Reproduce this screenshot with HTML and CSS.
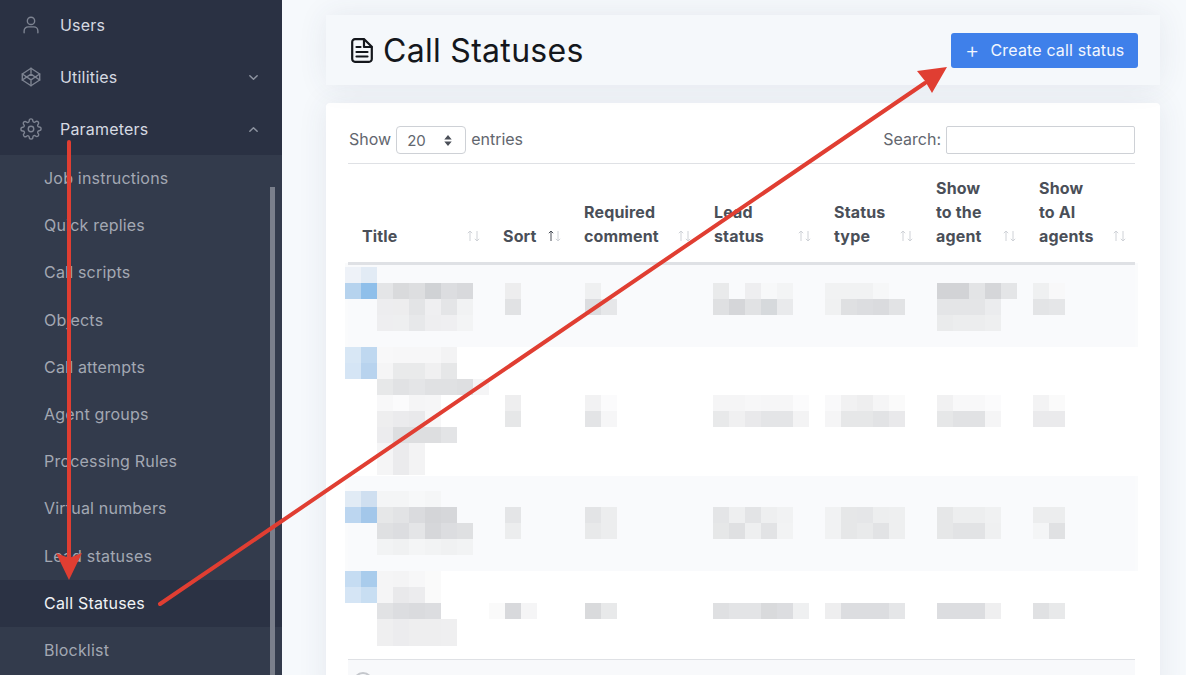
FILE: index.html
```html
<!DOCTYPE html>
<html lang="en">
<head>
<meta charset="utf-8">
<title>Call Statuses</title>
<link rel="stylesheet" href="styles.css">
</head>
<body>
<div class="app">
  <aside class="sidebar">
    <ul class="menu">
      <li class="menu-item">
        <svg class="menu-icon" viewBox="0 0 24 24"><circle cx="12" cy="7.5" r="4"/><path d="M4.5 20.5v-2a4.5 4.5 0 0 1 4.5-4.5h6a4.5 4.5 0 0 1 4.5 4.5v2"/></svg>
        <span class="menu-label">Users</span>
      </li>
      <li class="menu-item">
        <svg class="menu-icon" viewBox="0 0 24 24"><path d="M12 2.5l9.5 6.2v6.6L12 21.5l-9.5-6.2V8.7z"/><path d="M12 2.5v5.2M12 16.3v5.2M2.5 8.7L12 15.2l9.5-6.5M2.5 15.3L12 8.8l9.5 6.5"/></svg>
        <span class="menu-label">Utilities</span>
        <svg class="chevron" viewBox="0 0 12 12"><path d="M2 4l4 4 4-4"/></svg>
      </li>
      <li class="menu-item">
        <svg class="menu-icon" viewBox="0 0 24 24"><circle cx="12" cy="12" r="3"/><path d="M19.4 15a1.65 1.65 0 0 0 .33 1.82l.06.06a2 2 0 1 1-2.83 2.83l-.06-.06a1.65 1.65 0 0 0-2.82 1.17V21a2 2 0 1 1-4 0v-.09a1.65 1.65 0 0 0-2.82-1.12l-.06.06a2 2 0 1 1-2.83-2.83l.06-.06a1.65 1.65 0 0 0-1.17-2.82H3a2 2 0 1 1 0-4h.09a1.65 1.65 0 0 0 1.12-2.82l-.06-.06a2 2 0 1 1 2.83-2.83l.06.06a1.65 1.65 0 0 0 1.82.33H9a1.65 1.65 0 0 0 1-1.51V3a2 2 0 1 1 4 0v.09a1.65 1.65 0 0 0 2.82 1.12l.06-.06a2 2 0 1 1 2.83 2.83l-.06.06a1.65 1.65 0 0 0 1.12 2.82H21a2 2 0 1 1 0 4h-.09a1.65 1.65 0 0 0-1.51 1z"/></svg>
        <span class="menu-label">Parameters</span>
        <svg class="chevron" viewBox="0 0 12 12"><path d="M2 8l4-4 4 4"/></svg>
      </li>
    </ul>
    <div class="submenu-wrap">
      <ul class="submenu">
        <li class="sub-item">Job instructions</li>
        <li class="sub-item">Quick replies</li>
        <li class="sub-item">Call scripts</li>
        <li class="sub-item">Objects</li>
        <li class="sub-item">Call attempts</li>
        <li class="sub-item">Agent groups</li>
        <li class="sub-item">Processing Rules</li>
        <li class="sub-item">Virtual numbers</li>
        <li class="sub-item">Lead statuses</li>
        <li class="sub-item active">Call Statuses</li>
        <li class="sub-item">Blocklist</li>
      </ul>
      <div class="scrollbar"></div>
    </div>
  </aside>

  <main class="content">
    <header class="page-head">
      <h1 class="page-title">
        <svg class="title-icon" viewBox="0 0 22 25"><path d="M4 1.2h9.2l7.6 7.6V21a2.8 2.8 0 0 1-2.8 2.8H4A2.8 2.8 0 0 1 1.2 21V4A2.8 2.8 0 0 1 4 1.2z"/><path d="M13 1.5v7.5h7.5M5.5 9h4M5.5 14h11M5.5 18.5h11"/></svg>
        Call Statuses
      </h1>
      <button class="create-btn"><span class="plus">+</span>Create call status</button>
    </header>

    <section class="card">
      <div class="controls">
        <label class="length">Show
          <span class="select">20
            <svg class="select-caret" viewBox="0 0 10 14"><path d="M5 1l4 5H1zM5 13L1 8h8z"/></svg>
          </span>
          entries</label>
        <label class="search">Search: <span class="search-input"></span></label>
      </div>
      <table class="grid">
        <colgroup>
          <col class="c-title"><col class="c-sort"><col class="c-req"><col class="c-lead"><col class="c-stype"><col class="c-agent"><col class="c-ai">
        </colgroup>
        <thead>
          <tr>
            <th><span>Title</span><svg class="sorter" viewBox="0 0 16 12"><path d="M4 11V1M1.8 3.2L4 1l2.2 2.2M11 1v10M8.8 8.8L11 11l2.2-2.2"/></svg></th>
            <th><span>Sort</span><svg class="sorter on" viewBox="0 0 16 12"><path class="up" d="M4 11V1M1.8 3.2L4 1l2.2 2.2"/><path d="M11 1v10M8.8 8.8L11 11l2.2-2.2"/></svg></th>
            <th><span>Required<br>comment</span><svg class="sorter" viewBox="0 0 16 12"><path d="M4 11V1M1.8 3.2L4 1l2.2 2.2M11 1v10M8.8 8.8L11 11l2.2-2.2"/></svg></th>
            <th><span>Lead<br>status</span><svg class="sorter" viewBox="0 0 16 12"><path d="M4 11V1M1.8 3.2L4 1l2.2 2.2M11 1v10M8.8 8.8L11 11l2.2-2.2"/></svg></th>
            <th><span>Status<br>type</span><svg class="sorter" viewBox="0 0 16 12"><path d="M4 11V1M1.8 3.2L4 1l2.2 2.2M11 1v10M8.8 8.8L11 11l2.2-2.2"/></svg></th>
            <th><span>Show<br>to the<br>agent</span><svg class="sorter" viewBox="0 0 16 12"><path d="M4 11V1M1.8 3.2L4 1l2.2 2.2M11 1v10M8.8 8.8L11 11l2.2-2.2"/></svg></th>
            <th><span>Show<br>to AI<br>agents</span><svg class="sorter" viewBox="0 0 16 12"><path d="M4 11V1M1.8 3.2L4 1l2.2 2.2M11 1v10M8.8 8.8L11 11l2.2-2.2"/></svg></th>
          </tr>
        </thead>
        <tbody>
          <tr class="row r1 odd">
            <td><svg class="mosaic" viewBox="0 0 141 82"><rect x="-3" y="2" width="16" height="16" fill="#eef2f8"/><rect x="13" y="2" width="16" height="16" fill="#e2ebf5"/><rect x="-3" y="18" width="16" height="16" fill="#b6d3ee"/><rect x="13" y="18" width="16" height="16" fill="#8fbfea"/><rect x="29" y="18" width="16" height="16" fill="#e4e5e7"/><rect x="45" y="18" width="16" height="16" fill="#d9dadc"/><rect x="61" y="18" width="16" height="16" fill="#dddee0"/><rect x="77" y="18" width="16" height="16" fill="#d0d2d5"/><rect x="93" y="18" width="16" height="16" fill="#dcdde0"/><rect x="109" y="18" width="16" height="16" fill="#d8d9dc"/><rect x="29" y="34" width="16" height="16" fill="#ededef"/><rect x="45" y="34" width="16" height="16" fill="#ededee"/><rect x="61" y="34" width="16" height="16" fill="#e3e4e6"/><rect x="77" y="34" width="16" height="16" fill="#efeff1"/><rect x="93" y="34" width="16" height="16" fill="#e4e5e7"/><rect x="109" y="34" width="16" height="16" fill="#f1f2f3"/><rect x="29" y="50" width="16" height="16" fill="#eeeef0"/><rect x="45" y="50" width="16" height="16" fill="#eeeff0"/><rect x="61" y="50" width="16" height="16" fill="#e7e8ea"/><rect x="77" y="50" width="16" height="16" fill="#eeeef0"/><rect x="93" y="50" width="16" height="16" fill="#efeff1"/><rect x="109" y="50" width="16" height="16" fill="#f3f4f5"/></svg></td>
            <td><svg class="mosaic" viewBox="0 0 81 82"><rect x="16" y="18" width="16" height="16" fill="#ededee"/><rect x="16" y="34" width="16" height="16" fill="#e1e2e4"/></svg></td>
            <td><svg class="mosaic" viewBox="0 0 130 82"><rect x="15" y="18" width="16" height="16" fill="#eff0f1"/><rect x="15" y="34" width="16" height="16" fill="#dcdde0"/><rect x="31" y="34" width="16" height="16" fill="#e6e7e9"/></svg></td>
            <td><svg class="mosaic" viewBox="0 0 120 82"><rect x="13" y="18" width="16" height="16" fill="#e9eaeb"/><rect x="45" y="18" width="16" height="16" fill="#eeeef0"/><rect x="61" y="18" width="16" height="16" fill="#f7f8f9"/><rect x="77" y="18" width="16" height="16" fill="#f3f4f5"/><rect x="13" y="34" width="16" height="16" fill="#dfe0e2"/><rect x="29" y="34" width="16" height="16" fill="#d5d6d9"/><rect x="45" y="34" width="16" height="16" fill="#e1e2e4"/><rect x="61" y="34" width="16" height="16" fill="#d6d9dc"/><rect x="77" y="34" width="16" height="16" fill="#e9eaec"/></svg></td>
            <td><svg class="mosaic" viewBox="0 0 102 82"><rect x="5" y="18" width="48" height="16" fill="#f1f2f3"/><rect x="53" y="18" width="16" height="16" fill="#f6f7f8"/><rect x="5" y="34" width="16" height="16" fill="#f0f1f2"/><rect x="21" y="34" width="16" height="16" fill="#dfe0e2"/><rect x="37" y="34" width="16" height="16" fill="#dcdde0"/><rect x="53" y="34" width="16" height="16" fill="#dadbde"/><rect x="69" y="34" width="16" height="16" fill="#e2e3e5"/></svg></td>
            <td><svg class="mosaic" viewBox="0 0 103 82"><rect x="15" y="18" width="32" height="16" fill="#d2d3d6"/><rect x="47" y="18" width="16" height="16" fill="#e3e4e6"/><rect x="63" y="18" width="16" height="16" fill="#d5d6d9"/><rect x="79" y="18" width="16" height="16" fill="#e4e5e7"/><rect x="15" y="34" width="48" height="16" fill="#e4e5e7"/><rect x="63" y="34" width="16" height="16" fill="#ebecee"/><rect x="15" y="50" width="16" height="16" fill="#eaebec"/><rect x="31" y="50" width="32" height="16" fill="#ecedee"/><rect x="63" y="50" width="16" height="16" fill="#eeeff0"/></svg></td>
            <td><svg class="mosaic" viewBox="0 0 110 82"><rect x="8" y="18" width="16" height="16" fill="#eff0f1"/><rect x="24" y="18" width="16" height="16" fill="#f8f8f9"/><rect x="8" y="34" width="16" height="16" fill="#e3e4e6"/><rect x="24" y="34" width="16" height="16" fill="#e5e6e8"/></svg></td>
          </tr>
          <tr class="row r2">
            <td><svg class="mosaic" viewBox="0 0 141 129"><rect x="-3" y="0" width="16" height="16" fill="#d8e7f5"/><rect x="13" y="0" width="16" height="16" fill="#bfd8f0"/><rect x="-3" y="16" width="16" height="16" fill="#d5e5f5"/><rect x="13" y="16" width="16" height="16" fill="#b8d3ee"/><rect x="29" y="0" width="16" height="16" fill="#f8f8f9"/><rect x="45" y="0" width="48" height="16" fill="#f7f7f8"/><rect x="93" y="0" width="16" height="16" fill="#f3f3f4"/><rect x="29" y="16" width="16" height="16" fill="#f5f5f6"/><rect x="45" y="16" width="32" height="16" fill="#e9eaeb"/><rect x="77" y="16" width="16" height="16" fill="#f0f0f1"/><rect x="93" y="16" width="16" height="16" fill="#e6e7e8"/><rect x="29" y="32" width="16" height="16" fill="#e7e8e9"/><rect x="45" y="32" width="16" height="16" fill="#e1e2e4"/><rect x="61" y="32" width="16" height="16" fill="#e4e5e7"/><rect x="77" y="32" width="32" height="16" fill="#e0e1e3"/><rect x="109" y="32" width="16" height="16" fill="#dedfe1"/><rect x="125" y="32" width="16" height="16" fill="#f5f5f6"/><rect x="29" y="48" width="16" height="16" fill="#f8f8f9"/><rect x="45" y="48" width="16" height="16" fill="#fbfbfc"/><rect x="61" y="48" width="16" height="16" fill="#f5f5f6"/><rect x="77" y="48" width="16" height="16" fill="#f6f6f7"/><rect x="29" y="64" width="16" height="16" fill="#eeeeef"/><rect x="45" y="64" width="16" height="16" fill="#ebebed"/><rect x="61" y="64" width="16" height="16" fill="#e9e9eb"/><rect x="77" y="64" width="16" height="16" fill="#f7f7f8"/><rect x="29" y="80" width="16" height="16" fill="#ececee"/><rect x="45" y="80" width="48" height="16" fill="#dddee0"/><rect x="93" y="80" width="16" height="16" fill="#e3e4e6"/><rect x="29" y="96" width="16" height="32" fill="#f5f5f6"/><rect x="45" y="96" width="16" height="32" fill="#ebebed"/><rect x="61" y="96" width="16" height="32" fill="#f3f3f4"/></svg></td>
            <td><svg class="mosaic" viewBox="0 0 81 129"><rect x="16" y="48" width="16" height="16" fill="#eeeeef"/><rect x="16" y="64" width="16" height="16" fill="#e6e7e8"/></svg></td>
            <td><svg class="mosaic" viewBox="0 0 130 129"><rect x="15" y="48" width="16" height="16" fill="#f2f2f3"/><rect x="31" y="48" width="16" height="16" fill="#fbfbfc"/><rect x="15" y="64" width="16" height="16" fill="#e3e4e6"/><rect x="31" y="64" width="16" height="16" fill="#f6f6f7"/></svg></td>
            <td><svg class="mosaic" viewBox="0 0 120 129"><rect x="13" y="48" width="32" height="16" fill="#f5f5f6"/><rect x="45" y="48" width="16" height="16" fill="#f7f7f8"/><rect x="61" y="48" width="32" height="16" fill="#f6f6f7"/><rect x="93" y="48" width="16" height="16" fill="#fbfbfc"/><rect x="13" y="64" width="16" height="16" fill="#e8e9ea"/><rect x="29" y="64" width="16" height="16" fill="#f0f0f1"/><rect x="45" y="64" width="16" height="16" fill="#e9e9eb"/><rect x="61" y="64" width="32" height="16" fill="#e4e5e7"/><rect x="93" y="64" width="16" height="16" fill="#f3f3f4"/></svg></td>
            <td><svg class="mosaic" viewBox="0 0 102 129"><rect x="5" y="48" width="16" height="16" fill="#f9f9fa"/><rect x="21" y="48" width="16" height="16" fill="#f1f1f2"/><rect x="37" y="48" width="16" height="16" fill="#eeeeef"/><rect x="53" y="48" width="16" height="16" fill="#f5f5f6"/><rect x="69" y="48" width="16" height="16" fill="#fafafa"/><rect x="5" y="64" width="16" height="16" fill="#f5f5f6"/><rect x="21" y="64" width="32" height="16" fill="#e6e7e8"/><rect x="53" y="64" width="16" height="16" fill="#e2e3e5"/><rect x="69" y="64" width="16" height="16" fill="#e9e9eb"/></svg></td>
            <td><svg class="mosaic" viewBox="0 0 103 129"><rect x="15" y="48" width="16" height="16" fill="#f1f1f2"/><rect x="31" y="48" width="32" height="16" fill="#f8f8f9"/><rect x="63" y="48" width="16" height="16" fill="#fbfbfc"/><rect x="15" y="64" width="16" height="16" fill="#e6e7e8"/><rect x="31" y="64" width="32" height="16" fill="#e1e2e4"/><rect x="63" y="64" width="16" height="16" fill="#f5f5f6"/></svg></td>
            <td><svg class="mosaic" viewBox="0 0 110 129"><rect x="8" y="48" width="16" height="16" fill="#f3f3f4"/><rect x="24" y="48" width="16" height="16" fill="#fafafa"/><rect x="8" y="64" width="32" height="16" fill="#eaeaec"/></svg></td>
          </tr>
          <tr class="row r3 odd">
            <td><svg class="mosaic" viewBox="0 0 141 95"><rect x="-3" y="15" width="16" height="16" fill="#e1ebf5"/><rect x="13" y="15" width="16" height="16" fill="#cfdff0"/><rect x="-3" y="31" width="16" height="16" fill="#bcd6f0"/><rect x="13" y="31" width="16" height="16" fill="#a3c7ea"/><rect x="29" y="15" width="32" height="16" fill="#f4f5f6"/><rect x="61" y="15" width="16" height="16" fill="#f7f8f9"/><rect x="77" y="15" width="16" height="16" fill="#f5f6f7"/><rect x="29" y="31" width="16" height="16" fill="#e6e7e8"/><rect x="45" y="31" width="16" height="16" fill="#e2e3e5"/><rect x="61" y="31" width="16" height="16" fill="#dadbde"/><rect x="77" y="31" width="16" height="16" fill="#d4d5d8"/><rect x="93" y="31" width="16" height="16" fill="#d6d7da"/><rect x="29" y="47" width="16" height="16" fill="#dfe0e2"/><rect x="45" y="47" width="16" height="16" fill="#dcdde0"/><rect x="61" y="47" width="16" height="16" fill="#e4e5e7"/><rect x="77" y="47" width="16" height="16" fill="#d6d7da"/><rect x="93" y="47" width="16" height="16" fill="#dcdde0"/><rect x="109" y="47" width="16" height="16" fill="#dfe0e2"/><rect x="29" y="63" width="16" height="16" fill="#f2f3f4"/><rect x="45" y="63" width="16" height="16" fill="#f0f1f2"/><rect x="61" y="63" width="16" height="16" fill="#f4f5f6"/><rect x="77" y="63" width="16" height="16" fill="#f2f3f4"/><rect x="93" y="63" width="16" height="16" fill="#f0f1f2"/><rect x="109" y="63" width="16" height="16" fill="#f2f3f4"/></svg></td>
            <td><svg class="mosaic" viewBox="0 0 81 95"><rect x="16" y="31" width="16" height="16" fill="#e4e5e7"/><rect x="16" y="47" width="16" height="16" fill="#ecedee"/></svg></td>
            <td><svg class="mosaic" viewBox="0 0 130 95"><rect x="15" y="31" width="16" height="16" fill="#e3e4e6"/><rect x="31" y="31" width="16" height="16" fill="#ecedee"/><rect x="15" y="47" width="16" height="16" fill="#e8e9ea"/><rect x="31" y="47" width="16" height="16" fill="#ecedee"/></svg></td>
            <td><svg class="mosaic" viewBox="0 0 120 95"><rect x="13" y="31" width="16" height="16" fill="#e4e5e7"/><rect x="29" y="31" width="16" height="16" fill="#eeeff0"/><rect x="45" y="31" width="16" height="16" fill="#e3e4e6"/><rect x="61" y="31" width="16" height="16" fill="#eeeff0"/><rect x="77" y="31" width="16" height="16" fill="#f1f2f3"/><rect x="13" y="47" width="16" height="16" fill="#e6e7e8"/><rect x="29" y="47" width="16" height="16" fill="#dfe0e2"/><rect x="45" y="47" width="16" height="16" fill="#eeeff0"/><rect x="61" y="47" width="16" height="16" fill="#e2e3e5"/><rect x="77" y="47" width="16" height="16" fill="#f2f3f4"/></svg></td>
            <td><svg class="mosaic" viewBox="0 0 102 95"><rect x="5" y="31" width="16" height="16" fill="#f1f2f3"/><rect x="21" y="31" width="16" height="16" fill="#e6e7e8"/><rect x="37" y="31" width="16" height="16" fill="#e5e6e8"/><rect x="53" y="31" width="16" height="16" fill="#edeeef"/><rect x="69" y="31" width="16" height="16" fill="#eeeff0"/><rect x="5" y="47" width="16" height="16" fill="#f1f2f3"/><rect x="21" y="47" width="16" height="16" fill="#e6e7e8"/><rect x="37" y="47" width="16" height="16" fill="#e9eaeb"/><rect x="53" y="47" width="16" height="16" fill="#e2e3e5"/><rect x="69" y="47" width="16" height="16" fill="#eeeff0"/></svg></td>
            <td><svg class="mosaic" viewBox="0 0 103 95"><rect x="15" y="31" width="16" height="16" fill="#e6e7e8"/><rect x="31" y="31" width="32" height="16" fill="#edeeef"/><rect x="63" y="31" width="16" height="16" fill="#f0f1f2"/><rect x="15" y="47" width="16" height="16" fill="#e6e7e8"/><rect x="31" y="47" width="32" height="16" fill="#e2e3e5"/><rect x="63" y="47" width="16" height="16" fill="#eff0f1"/></svg></td>
            <td><svg class="mosaic" viewBox="0 0 110 95"><rect x="8" y="31" width="32" height="16" fill="#ecedee"/><rect x="8" y="47" width="16" height="16" fill="#f4f5f6"/><rect x="24" y="47" width="16" height="16" fill="#e0e1e3"/></svg></td>
          </tr>
          <tr class="row r4">
            <td><svg class="mosaic" viewBox="0 0 141 88"><rect x="-3" y="0" width="16" height="16" fill="#c5dcf2"/><rect x="13" y="0" width="16" height="16" fill="#a9ccec"/><rect x="-3" y="16" width="16" height="16" fill="#d5e5f5"/><rect x="13" y="16" width="16" height="16" fill="#c8def2"/><rect x="29" y="0" width="16" height="16" fill="#f5f5f6"/><rect x="45" y="0" width="16" height="16" fill="#f4f4f5"/><rect x="61" y="0" width="16" height="16" fill="#f7f7f8"/><rect x="77" y="0" width="16" height="16" fill="#fafafa"/><rect x="29" y="16" width="16" height="16" fill="#f5f5f6"/><rect x="45" y="16" width="16" height="16" fill="#e9e9eb"/><rect x="61" y="16" width="16" height="16" fill="#ececee"/><rect x="77" y="16" width="16" height="16" fill="#fafafa"/><rect x="29" y="32" width="16" height="16" fill="#e1e2e4"/><rect x="45" y="32" width="16" height="16" fill="#dcdde0"/><rect x="61" y="32" width="16" height="16" fill="#dadbde"/><rect x="77" y="32" width="16" height="16" fill="#dcdde0"/><rect x="29" y="48" width="16" height="27" fill="#efeff0"/><rect x="45" y="48" width="16" height="27" fill="#ececee"/><rect x="61" y="48" width="32" height="27" fill="#eeeeef"/><rect x="93" y="48" width="16" height="27" fill="#efeff0"/></svg></td>
            <td><svg class="mosaic" viewBox="0 0 81 88"><rect x="0" y="32" width="16" height="16" fill="#fafafa"/><rect x="16" y="32" width="16" height="16" fill="#d8d9dc"/><rect x="32" y="32" width="16" height="16" fill="#f5f5f6"/></svg></td>
            <td><svg class="mosaic" viewBox="0 0 130 88"><rect x="15" y="32" width="16" height="16" fill="#d9dadc"/><rect x="31" y="32" width="16" height="16" fill="#e8e9ea"/></svg></td>
            <td><svg class="mosaic" viewBox="0 0 120 88"><rect x="13" y="32" width="16" height="16" fill="#dfe0e2"/><rect x="29" y="32" width="32" height="16" fill="#e3e4e6"/><rect x="61" y="32" width="16" height="16" fill="#d9dadc"/><rect x="77" y="32" width="16" height="16" fill="#dcdde0"/><rect x="93" y="32" width="16" height="16" fill="#eff0f1"/></svg></td>
            <td><svg class="mosaic" viewBox="0 0 102 88"><rect x="5" y="32" width="16" height="16" fill="#eeeeef"/><rect x="21" y="32" width="48" height="16" fill="#dcdde0"/><rect x="69" y="32" width="16" height="16" fill="#e5e6e8"/></svg></td>
            <td><svg class="mosaic" viewBox="0 0 103 88"><rect x="15" y="32" width="48" height="16" fill="#dcdde0"/><rect x="63" y="32" width="16" height="16" fill="#efeff0"/></svg></td>
            <td><svg class="mosaic" viewBox="0 0 110 88"><rect x="8" y="32" width="16" height="16" fill="#e0e1e3"/><rect x="24" y="32" width="16" height="16" fill="#e8e9ea"/></svg></td>
          </tr>
        </tbody>
        <tfoot>
          <tr class="foot"><td colspan="7"><span class="foot-circle"></span></td></tr>
        </tfoot>
      </table>
    </section>
  </main>
</div>
<svg class="annotations" viewBox="0 0 1186 675">
  <path class="arrow-line" d="M69 142V560"/>
  <path class="arrow-head" d="M69 580L56 553L69 558L82 553Z"/>
  <path class="arrow-line" d="M160 604L925 83"/>
  <path class="arrow-head" d="M947 67L917 71L925 81L932 93Z"/>
</svg>
</body>
</html>
```
FILE: styles.css
```css
* { box-sizing: border-box; }
html, body { margin: 0; height: 675px; overflow: hidden; }
body { position: relative; background: #f6f9fc; font-family: Inter, "Liberation Sans", sans-serif; color: #4a4f58; }
.app { display: flex; height: 675px; }

.sidebar { position: relative; z-index: 2; width: 282px; flex: none; background: #2a3143; display: flex; flex-direction: column; overflow: hidden; }
.menu { list-style: none; margin: -1px 0 0; padding: 0; }
.menu-item { height: 52px; display: flex; align-items: center; padding: 0 23px 0 20px; color: #d6dae2; font-size: 16px; letter-spacing: .2px; }
.menu-icon { width: 22px; height: 22px; flex: none; fill: none; stroke: #7e8492; stroke-width: 1.5; stroke-linecap: round; stroke-linejoin: round; }
.menu-label { margin-left: 18px; flex: 1; }
.chevron { width: 11px; height: 11px; fill: none; stroke: #8d93a0; stroke-width: 1.6; stroke-linecap: round; stroke-linejoin: round; }
.submenu-wrap { position: relative; flex: 1; background: #333b4c; }
.submenu { list-style: none; margin: 0; padding: .1px 0 0; }
.sub-item { height: 47.2px; line-height: 47.2px; padding-left: 44px; color: #a3a8b3; font-size: 16px; letter-spacing: .2px; }
.sub-item.active { background: #2b3244; color: #f0f2f6; }
.scrollbar { position: absolute; left: 270px; top: 32px; bottom: 0; width: 5px; background: #7a7f8b; }

.content { flex: 1; padding: 15px 26px 0 44px; min-width: 0; }
.page-head { position: relative; z-index: 1; height: 70px; background: #f5f8fb; box-shadow: 0 0 30px rgba(50, 70, 100, .09); display: flex; align-items: center; justify-content: space-between; padding: 0 22px 0 25px; }
.page-title { margin: 0; font-size: 32px; font-weight: 400; letter-spacing: .3px; color: #14171c; display: flex; align-items: center; gap: 10px; }
.title-icon { width: 22px; height: 25px; fill: none; stroke: #14171c; stroke-width: 2.2; stroke-linecap: round; stroke-linejoin: round; }
.create-btn { height: 35px; width: 187px; border: 0; border-radius: 3px; background: #3f80ea; color: #f3f7fe; font: 16px Inter, "Liberation Sans", sans-serif; letter-spacing: .15px; white-space: nowrap; display: flex; align-items: center; padding: 0 14px; }
.plus { font-size: 22px; font-weight: 300; margin-right: 11px; line-height: 1; }

.card { margin-top: 18px; background: #fff; box-shadow: 0 0 30px rgba(50, 70, 100, .09); border-radius: 4px 4px 0 0; padding: 23px 25px 0 22px; height: 600px; }
.controls { display: flex; justify-content: space-between; align-items: flex-start; height: 38px; border-bottom: 1px solid #dfe1e5; font-size: 16px; color: #62666e; }
.length, .search { display: flex; align-items: center; gap: 5px; height: 28px; padding-bottom: 3px; }
.length { margin-left: 1px; }
.select { width: 70px; height: 28px; margin-bottom: -3px; border: 1px solid #ced1d6; border-radius: 4px; display: flex; align-items: center; justify-content: space-between; padding: 0 12px 0 10px; font-size: 15px; }
.select-caret { width: 10px; height: 13px; fill: #4a4f58; }
.search-input { display: block; width: 189px; height: 28px; margin-bottom: -3px; border: 1px solid #ced1d6; border-radius: 2px; background: #fff; }

.grid { width: 787px; border-collapse: collapse; table-layout: fixed; }
.c-title { width: 141px; } .c-sort { width: 81px; } .c-req { width: 130px; } .c-lead { width: 120px; } .c-stype { width: 102px; } .c-agent { width: 103px; } .c-ai { width: 110px; }
.grid th { height: 99px; padding: 0 14px 14px; vertical-align: bottom; text-align: left; font-size: 16px; line-height: 24px; font-weight: 700; letter-spacing: .15px; color: #4a4f58; border-bottom: 3px solid #dfe1e5; position: relative; }
.sorter { position: absolute; right: 7px; bottom: 20px; width: 16px; height: 12px; fill: none; stroke: #cfd2d7; stroke-width: 1; }
.sorter .up { stroke: #4a4f58; }

.row td { padding: 0; vertical-align: top; }
.row.odd td { background: #f9fafc; }
.row.odd td:first-child { box-shadow: -3px 0 0 #fafbfc; }
.row.odd td:last-child { box-shadow: 3px 0 0 #fafbfc; }
.mosaic { display: block; width: 100%; overflow: visible; }
.r1 { height: 82px; } .r2 { height: 129px; } .r3 { height: 95px; } .r4 { height: 88px; }
.foot td { border-top: 1px solid #dfe1e5; background: #f8f9fb; height: 40px; padding: 10px 5px; vertical-align: top; }
.foot-circle { display: block; width: 20px; height: 20px; border: 2px solid #c4c7cc; border-radius: 50%; margin-top: 2px; }

.annotations { position: absolute; z-index: 3; left: 0; top: 0; width: 1186px; height: 675px; pointer-events: none; }
.arrow-line { fill: none; stroke: #e03e32; stroke-width: 4; stroke-linecap: round; }
.arrow-head { fill: #e03e32; }
```
